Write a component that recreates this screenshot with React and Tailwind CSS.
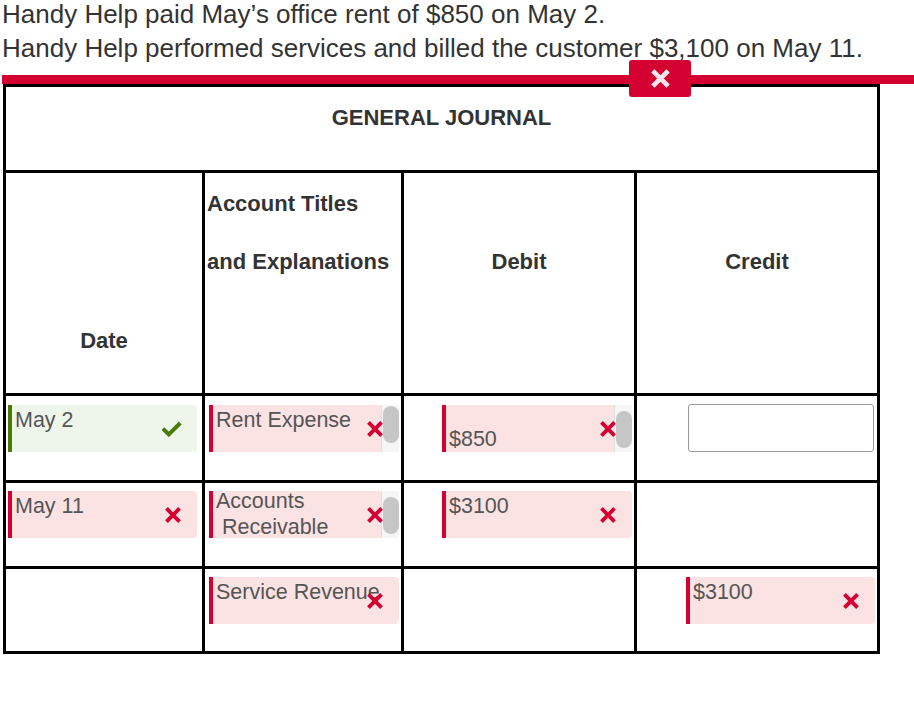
import React from 'react';

const font = { fontFamily: '"Liberation Sans", Arial, sans-serif' };

function XMark({ className = 'w-[18px] h-[18px]', color = '#d50032', width = 3.4 }) {
  return (
    <svg viewBox="0 0 16 16" className={className} fill="none">
      <path d="M2.2 2.2 L13.8 13.8 M13.8 2.2 L2.2 13.8" stroke={color} strokeWidth={width} />
    </svg>
  );
}

function Check() {
  return (
    <svg viewBox="0 0 20 15" className="w-[21px] h-[16px]" fill="none">
      <path d="M1.8 7.2 L7.4 12.6 L18.4 1.8" stroke="#4a7a0c" strokeWidth="3.8" />
    </svg>
  );
}

function Scrollbar({ offset = 'pt-[1px]' }) {
  return (
    <div className={`w-[18px] h-full shrink-0 bg-[#f6f6f6] border-l border-[#dedede] flex flex-col items-center ${offset}`}>
      <div className="w-[16px] h-[37px] rounded-full bg-[#c6c6c6]" />
    </div>
  );
}

// answer box: coloured strip on the left, text, optional scrollbar, mark on the right
function Answer({ children, ok = false, scroll = null, textClass = 'pt-[3px] leading-[25px]', width = 'w-[190px]' }) {
  return (
    <div
      className={`relative flex h-[47px] ${width} overflow-hidden rounded-r-[4px] border-l-4 ${
        ok ? 'border-[#4d7a0a] bg-[#eef6ec]' : 'border-[#d50032] bg-[#fbe2e3]'
      }`}
    >
      <div className={`flex-1 pl-[3px] text-[21.5px] text-[#555] whitespace-pre ${textClass}`}>
        {children}
      </div>
      {scroll && <Scrollbar offset={scroll} />}
      <div className="absolute right-[15px] top-1/2 -translate-y-1/2 flex items-center">
        {ok ? <Check /> : <XMark />}
      </div>
    </div>
  );
}

export default function App() {
  return (
    <div className="relative bg-white w-[914px] h-[722px] overflow-hidden" style={font}>
      {/* Problem text */}
      <div className="pl-[2px] text-[26px] leading-[29px] text-[#333]">
        <p>Handy Help paid May’s office rent of $850 on May 2.</p>
        <p className="mt-[5px]">Handy Help performed services and billed the customer $3,100 on May 11.</p>
      </div>

      {/* Red bar */}
      <div className="ml-[2px] mt-[12px] h-[9px] bg-[#d50032]" />

      {/* Close button */}
      <div className="absolute left-[629px] top-[60px] w-[62px] h-[37px] rounded-[3px] bg-[#d50032] flex items-center justify-center">
        <XMark className="w-[21px] h-[21px]" color="#fbe8ee" width={3.6} />
      </div>

      {/* Journal table */}
      <div className="ml-[3px] w-[877px] grid grid-cols-[196px_196px_230px_240px] grid-rows-[83px_220px_84px_83px_82px] gap-[3px] p-[3px] bg-black">
        <div className="col-span-4 bg-white text-center pt-[16px] text-[22px] leading-[29px] font-bold text-[#333]">
          GENERAL JOURNAL
        </div>

        {/* Column headings */}
        <div className="bg-white text-center pt-[153px] text-[22px] leading-[29px] font-bold text-[#333]">Date</div>
        <div className="bg-white pl-[2px] pt-[16px] text-[22px] leading-[29px] font-bold text-[#333]">
          <div>Account Titles</div>
          <div>&nbsp;</div>
          <div>and Explanations</div>
        </div>
        <div className="bg-white text-center pt-[74px] text-[22px] leading-[29px] font-bold text-[#333]">Debit</div>
        <div className="bg-white text-center pt-[74px] text-[22px] leading-[29px] font-bold text-[#333]">Credit</div>

        {/* Row 1 */}
        <div className="bg-white pl-[2px] pt-[9px]">
          <Answer ok width="w-[189px]">May 2</Answer>
        </div>
        <div className="bg-white pl-[4px] pt-[9px]">
          <Answer scroll="pt-[1px]">Rent Expense</Answer>
        </div>
        <div className="bg-white flex justify-end pr-[2px] pt-[9px]">
          <Answer scroll="pt-[6px]" textClass="pt-[22px] leading-[25px]">$850</Answer>
        </div>
        <div className="bg-white flex justify-end pr-[3px] pt-[8px]">
          <div className="w-[186px] h-[48px] rounded-[3px] border border-[#9b9b9b] bg-white" />
        </div>

        {/* Row 2 */}
        <div className="bg-white pl-[2px] pt-[8px]">
          <Answer width="w-[189px]">May 11</Answer>
        </div>
        <div className="bg-white pl-[4px] pt-[8px]">
          <Answer scroll="pt-[6px]" textClass="-mt-[3px] leading-[26px]">{'Accounts\n Receivable'}</Answer>
        </div>
        <div className="bg-white flex justify-end pr-[2px] pt-[8px]">
          <Answer>$3100</Answer>
        </div>
        <div className="bg-white" />

        {/* Row 3 */}
        <div className="bg-white" />
        <div className="bg-white pl-[4px] pt-[8px]">
          <Answer>Service Revenue</Answer>
        </div>
        <div className="bg-white" />
        <div className="bg-white flex justify-end pr-[2px] pt-[8px]">
          <Answer width="w-[189px]">$3100</Answer>
        </div>
      </div>
    </div>
  );
}
